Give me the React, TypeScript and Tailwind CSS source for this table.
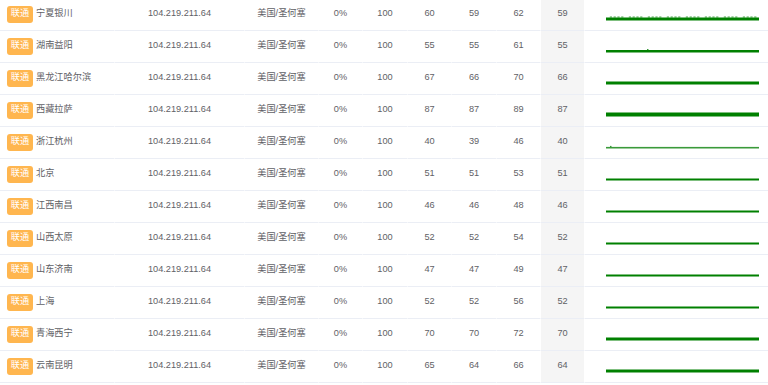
import React from "react";

type Row = { city: string; a: string; b: string; c: string; d: string; sw: number; color: string; extra?: "noise" | "bump" | "tick" };

const rows: Row[] = [
  { city: "宁夏银川", a: "60", b: "59", c: "62", d: "59", sw: 3, color: "#008000", extra: "noise" },
  { city: "湖南益阳", a: "55", b: "55", c: "61", d: "55", sw: 2.5, color: "#008000", extra: "bump" },
  { city: "黑龙江哈尔滨", a: "67", b: "66", c: "70", d: "66", sw: 3, color: "#008000" },
  { city: "西藏拉萨", a: "87", b: "87", c: "89", d: "87", sw: 4, color: "#008000" },
  { city: "浙江杭州", a: "40", b: "39", c: "46", d: "40", sw: 1.6, color: "#3a9a3a", extra: "tick" },
  { city: "北京", a: "51", b: "51", c: "53", d: "51", sw: 2, color: "#008000" },
  { city: "江西南昌", a: "46", b: "46", c: "48", d: "46", sw: 2, color: "#008000" },
  { city: "山西太原", a: "52", b: "52", c: "54", d: "52", sw: 2, color: "#008000" },
  { city: "山东济南", a: "47", b: "47", c: "49", d: "47", sw: 2, color: "#008000" },
  { city: "上海", a: "52", b: "52", c: "56", d: "52", sw: 2, color: "#008000" },
  { city: "青海西宁", a: "70", b: "70", c: "72", d: "70", sw: 3, color: "#008000" },
  { city: "云南昆明", a: "65", b: "64", c: "66", d: "64", sw: 3, color: "#008000" },
];

function Spark({ r }: { r: Row }) {
  const bottom = 21.5;
  const noise: number[] = [];
  if (r.extra === "noise") {
    for (let i = 0; i < 40; i++) {
      if ((i * 7) % 5 !== 0) noise.push(21 + i * 3.8);
    }
  }
  return (
    <svg width="183" height="31" viewBox="0 0 183 31">
      {noise.map((x, i) => (
        <rect key={i} x={x} y={bottom - r.sw - 1} width={2.2} height={1} fill="#4aa84a" />
      ))}
      <rect x={21} y={bottom - r.sw} width={153} height={r.sw} fill={r.color} />
      {r.extra === "bump" && <rect x={62} y={bottom - r.sw - 1} width={1.5} height={1} fill="#3a9a3a" />}
      {r.extra === "tick" && <rect x={25} y={bottom - r.sw - 1} width={1.5} height={1.5} fill="#3a9a3a" />}
    </svg>
  );
}

export default function App() {
  const cell = "h-[32px] pb-[1px] border-b border-b-[#ebeef5] border-r border-r-white flex items-center justify-center";
  return (
    <div
      className="w-[768px] h-[385px] overflow-hidden bg-white text-[#5f6166] text-[9.2px]"
      style={{ fontFamily: '"Liberation Sans", "Noto Sans CJK SC", sans-serif' }}
    >
      <div className="-mt-[1px] grid grid-cols-[115px_130px_74px_44px_45px_44px_45px_44px_44px_183px]">
        {rows.map((r, i) => (
          <React.Fragment key={i}>
            <div className="h-[32px] pb-[1px] border-b border-b-[#ebeef5] border-r border-r-white flex items-center pl-[7px]">
              <span className="w-[26px] h-[17px] rounded-[3px] bg-[#ffb64f] text-white flex items-center justify-center">
                联通
              </span>
              <span className="ml-[3px]">{r.city}</span>
            </div>
            <div className={cell}>104.219.211.64</div>
            <div className={cell}>美国/圣何塞</div>
            <div className={cell}>0%</div>
            <div className={cell}>100</div>
            <div className={cell}>{r.a}</div>
            <div className={cell}>{r.b}</div>
            <div className={cell}>{r.c}</div>
            <div className={cell + " bg-[#f5f5f5]"}>{r.d}</div>
            <div className="h-[32px] border-b border-b-[#ebeef5] flex items-start">
              <Spark r={r} />
            </div>
          </React.Fragment>
        ))}
      </div>
    </div>
  );
}
